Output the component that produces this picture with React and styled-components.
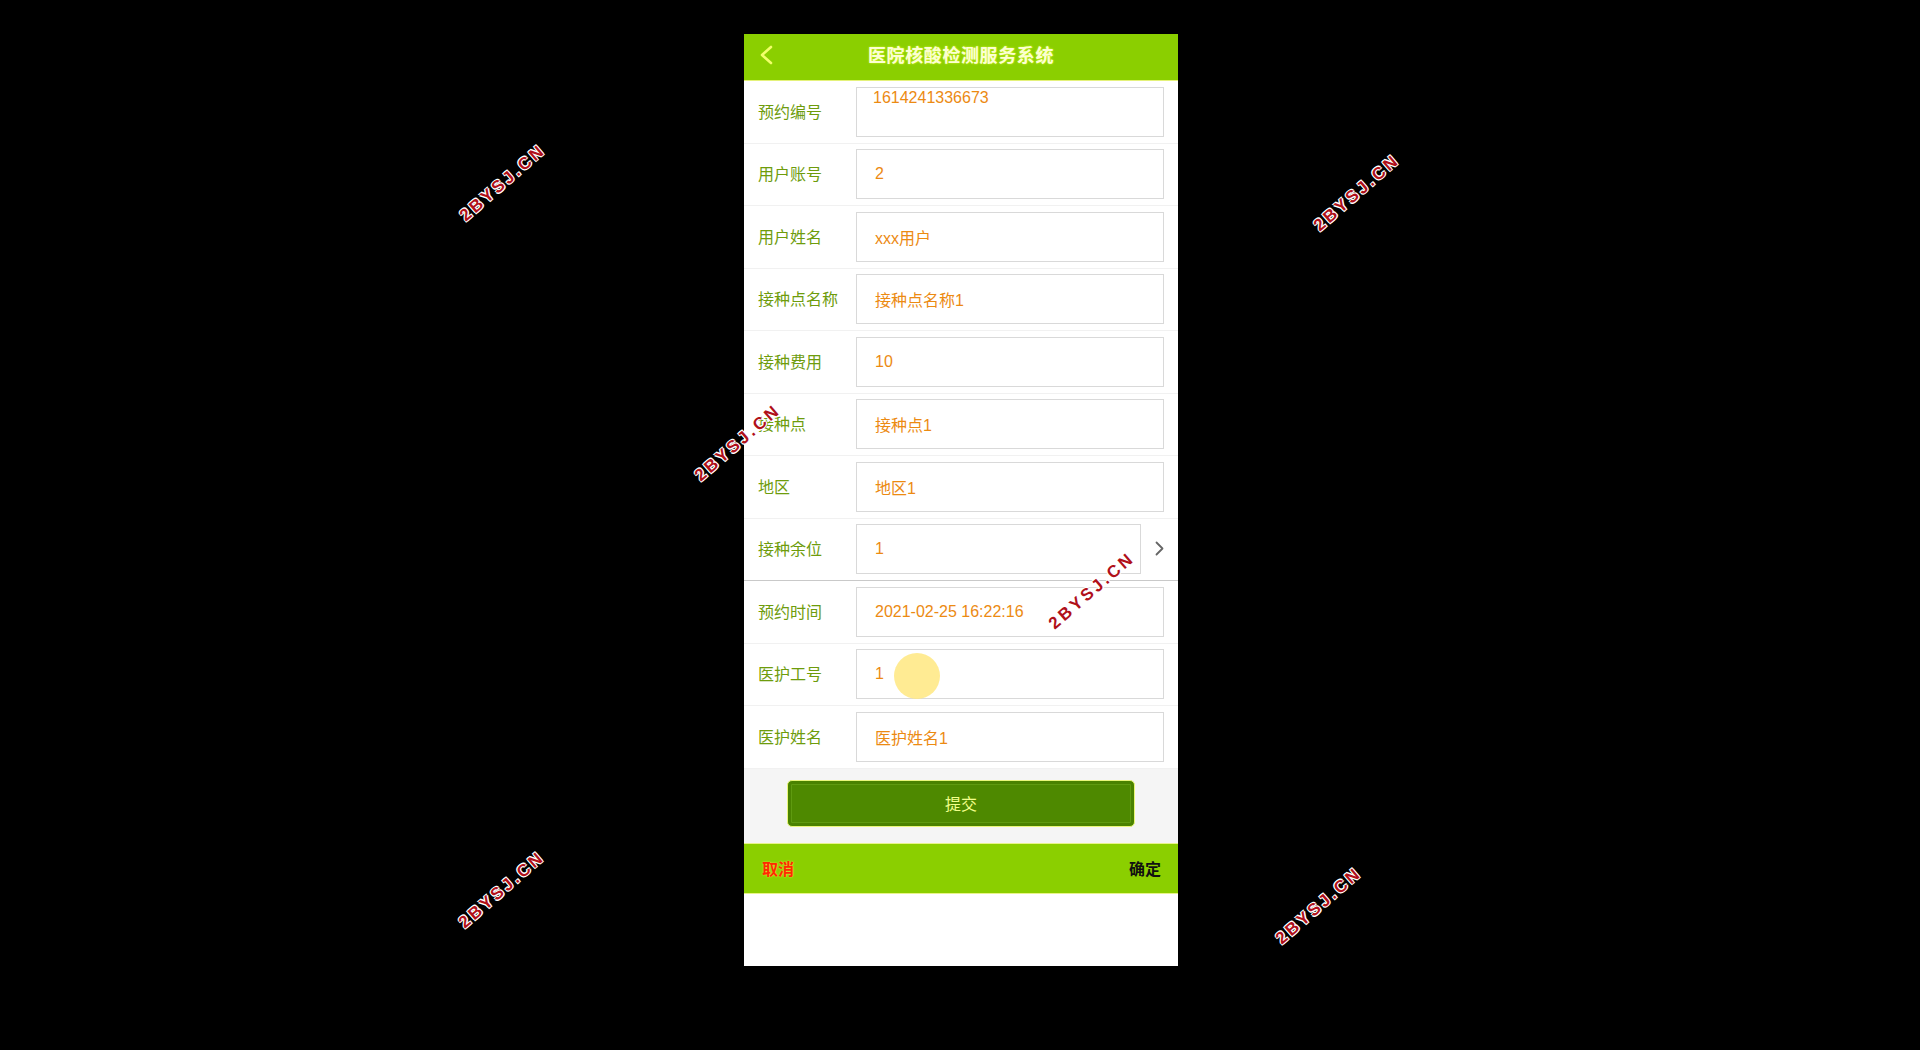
import styled, { createGlobalStyle } from 'styled-components';

const fields = [
  { label: '预约编号', value: '1614241336673', top: true },
  { label: '用户账号', value: '2' },
  { label: '用户姓名', value: 'xxx用户' },
  { label: '接种点名称', value: '接种点名称1' },
  { label: '接种费用', value: '10' },
  { label: '接种点', value: '接种点1' },
  { label: '地区', value: '地区1' },
  { label: '接种余位', value: '1', arrow: true },
  { label: '预约时间', value: '2021-02-25 16:22:16' },
  { label: '医护工号', value: '1' },
  { label: '医护姓名', value: '医护姓名1' },
];

const marks = [
  { x: 503, y: 183 },
  { x: 1357, y: 193 },
  { x: 738, y: 443 },
  { x: 1092, y: 591 },
  { x: 502, y: 890 },
  { x: 1319, y: 906 },
];

export default function App() {
  return (
    <Page>
      <GlobalStyle />
      <Phone>
        <Header>
          <BackButton>
            <svg width="16" height="20" viewBox="0 0 16 20">
              <path d="M13 2 L4 10 L13 18" fill="none" stroke="#f2ff6a" strokeWidth="2.6" strokeLinecap="round" strokeLinejoin="round" />
            </svg>
          </BackButton>
          <Title>医院核酸检测服务系统</Title>
          <span />
        </Header>

        <Form>
          {fields.map((f) => (
            <Row key={f.label} $arrow={f.arrow}>
              <Label>{f.label}</Label>
              <InputBox $top={f.top}>{f.value}</InputBox>
              {f.arrow && (
                <Arrow>
                  <svg width="9" height="15" viewBox="0 0 9 15">
                    <path d="M1.5 1.5 L7.5 7.5 L1.5 13.5" fill="none" stroke="#666" strokeWidth="1.8" strokeLinecap="round" strokeLinejoin="round" />
                  </svg>
                </Arrow>
              )}
            </Row>
          ))}
        </Form>

        <SubmitArea>
          <SubmitButton>提交</SubmitButton>
        </SubmitArea>

        <BottomBar>
          <Cancel>取消</Cancel>
          <Confirm>确定</Confirm>
        </BottomBar>

        <TapDot />
      </Phone>

      {marks.map((m, i) => (
        <Watermark key={i} style={{ left: m.x, top: m.y }}>
          2BYSJ.CN
        </Watermark>
      ))}
    </Page>
  );
}

const GlobalStyle = createGlobalStyle`
  html, body {
    margin: 0;
    padding: 0;
    background: #000;
  }
  * {
    box-sizing: border-box;
  }
`;

const Page = styled.div`
  position: relative;
  min-height: 1050px;
  padding-top: 34px;
  background: #000;
  overflow: hidden;
  font-family: 'Noto Sans CJK SC', 'Liberation Sans', sans-serif;
`;

const Phone = styled.div`
  position: relative;
  width: 434px;
  height: 932px;
  margin-left: 744px;
  background: #fff;
  display: flex;
  flex-direction: column;
`;

const Header = styled.div`
  display: grid;
  grid-template-columns: 60px 1fr 60px;
  align-items: center;
  height: 47px;
  background: #8bcf00;
  border-bottom: 1px solid #e4f27a;
`;

const BackButton = styled.div`
  display: flex;
  align-items: center;
  padding-left: 14px;
  padding-bottom: 5px;
`;

const Title = styled.div`
  text-align: center;
  font-size: 18px;
  font-weight: 700;
  color: #fbffd2;
  letter-spacing: 0.6px;
  padding-bottom: 6px;
  text-shadow: 0 0 2px #e6ff3a;
`;

const Form = styled.div`
  display: flex;
  flex-direction: column;
`;

const Row = styled.div`
  display: grid;
  grid-template-columns: ${(p) => (p.$arrow ? '112px 285px 1fr' : '112px 1fr')};
  align-items: center;
  height: 62.5px;
  padding-right: ${(p) => (p.$arrow ? '0' : '14px')};
  border-bottom: 1px solid ${(p) => (p.$arrow ? '#c9c9c9' : '#f1f1f1')};
  background: #fff;
`;

const Label = styled.div`
  padding-left: 14px;
  padding-bottom: 2px;
  font-size: 16px;
  color: #6e9c0c;
  white-space: nowrap;
`;

const InputBox = styled.div`
  display: flex;
  align-items: ${(p) => (p.$top ? 'flex-start' : 'center')};
  height: 50px;
  padding-left: ${(p) => (p.$top ? '16px' : '18px')};
  padding-top: ${(p) => (p.$top ? '1px' : '0')};
  border: 1px solid #d9d9d9;
  background: #fff;
  font-family: 'Liberation Sans', 'Noto Sans CJK SC', sans-serif;
  font-size: 16px;
  color: #ec8a12;
`;

const Arrow = styled.div`
  display: flex;
  align-items: center;
  padding-left: 14px;
  padding-bottom: 2px;
`;

const SubmitArea = styled.div`
  display: flex;
  justify-content: center;
  height: 74px;
  padding-top: 11px;
  background: #f5f5f5;
`;

const SubmitButton = styled.div`
  display: flex;
  align-items: center;
  justify-content: center;
  width: 348px;
  height: 47px;
  border-radius: 5px;
  border: 1px solid #e9f77a;
  background: #4e8900;
  box-shadow: inset 0 0 0 3px #4a8200, inset 0 0 0 4px #5f9a10;
  font-size: 16px;
  color: #f3ff8c;
`;

const BottomBar = styled.div`
  display: flex;
  align-items: center;
  justify-content: space-between;
  height: 51px;
  padding: 0 17px 0 18px;
  background: #8bcf00;
  border-top: 1px solid #e8f48a;
  border-bottom: 1px solid #e8f48a;
  font-size: 16px;
  font-weight: 700;
`;

const Cancel = styled.span`
  color: #ff2a00;
  text-shadow: 0 0 2px #ffe34a;
`;

const Confirm = styled.span`
  color: #111;
`;

const TapDot = styled.div`
  position: absolute;
  left: 150px;
  top: 619px;
  width: 46px;
  height: 46px;
  border-radius: 50%;
  background: rgba(255, 232, 128, 0.85);
`;

const Watermark = styled.div`
  position: absolute;
  transform: translate(-50%, -50%) rotate(-41deg);
  font-family: 'Liberation Sans', sans-serif;
  font-size: 17px;
  font-weight: 700;
  letter-spacing: 3px;
  white-space: nowrap;
  color: #b0101a;
  text-shadow: -1px -1px 0 #fff, 1px -1px 0 #fff, -1px 1px 0 #fff, 1px 1px 0 #fff;
  pointer-events: none;
`;
